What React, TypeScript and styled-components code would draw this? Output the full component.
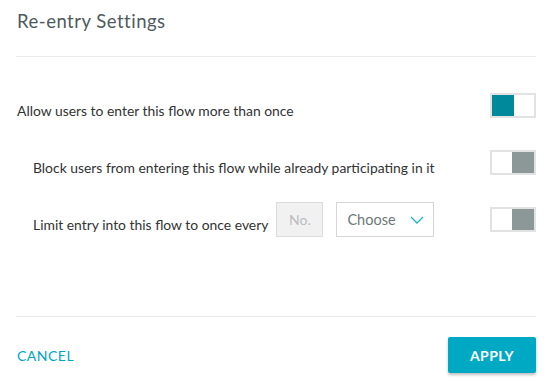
import React from 'react';
import styled, { createGlobalStyle } from 'styled-components';

const GlobalStyle = createGlobalStyle`
  body {
    margin: 0;
    background: #fff;
    font-family: Lato, "Open Sans", sans-serif;
  }
`;

const Modal = styled.div`
  width: 556px;
  height: 385px;
  display: flex;
  flex-direction: column;
  padding: 0 20px 0 16px;
  box-sizing: border-box;
`;

const Header = styled.div`
  height: 57px;
  display: flex;
  align-items: center;
  padding: 0 0 14px 1px;
  border-bottom: 1px solid #ebebeb;
  box-sizing: border-box;
`;

const Title = styled.h2`
  margin: 0;
  font-size: 18.5px;
  font-weight: 400;
  letter-spacing: 0.5px;
  color: #4f5a5d;
`;

const Body = styled.div`
  flex: 1;
  display: flex;
  flex-direction: column;
  padding-top: 36px;
`;

const Row = styled.div<{ $indent?: boolean; $gap: number }>`
  display: flex;
  align-items: center;
  height: 25px;
  margin-bottom: ${(p) => p.$gap}px;
  padding-left: ${(p) => (p.$indent ? 17 : 1)}px;
`;

const Label = styled.span`
  font-size: 13.9px;
  color: #333;
  flex: 0 0 auto;
  padding-top: 9px;
`;

const Controls = styled.div`
  display: flex;
  align-items: center;
  gap: 13px;
  margin-left: 8px;
`;

const NumberBox = styled.div`
  width: 47px;
  height: 35px;
  box-sizing: border-box;
  border: 1px solid #dcdcdc;
  background: #f1f1f1;
  color: #b8bcbd;
  font-size: 14px;
  display: flex;
  align-items: center;
  justify-content: center;
`;

const Select = styled.div`
  width: 98px;
  height: 35px;
  box-sizing: border-box;
  border: 1px solid #d6d6d6;
  background: #fff;
  color: #6d7779;
  font-size: 14.5px;
  display: flex;
  align-items: center;
  justify-content: space-between;
  padding: 0 9px 0 10px;
`;

const Spacer = styled.div`
  flex: 1;
`;

const Toggle = styled.div`
  width: 46px;
  height: 25px;
  box-sizing: border-box;
  border: 2px solid #e2e2e2;
  display: flex;
  background: #fff;
`;

const Knob = styled.div<{ $on?: boolean }>`
  width: 22px;
  height: 100%;
  margin-left: ${(p) => (p.$on ? 0 : 20)}px;
  background: ${(p) => (p.$on ? '#00889b' : '#8c9797')};
`;

const Footer = styled.div`
  border-top: 1px solid #ebebeb;
  display: flex;
  align-items: center;
  justify-content: space-between;
  padding: 20px 0 12px 1px;
`;

const CancelButton = styled.button`
  border: none;
  background: none;
  padding: 0;
  font-family: inherit;
  font-size: 14px;
  color: #00a6c0;
  letter-spacing: 0.5px;
`;

const ApplyButton = styled.button`
  width: 88px;
  height: 36px;
  border: none;
  border-radius: 2px;
  background: #00a9c3;
  color: #fff;
  font-family: inherit;
  font-size: 14px;
  font-weight: 700;
  letter-spacing: 0.4px;
  box-shadow: 0 2px 3px rgba(0, 0, 0, 0.25);
`;

const Chevron = () => (
  <svg width="14" height="8" viewBox="0 0 14 8" fill="none">
    <path d="M1 1l6 6 6-6" stroke="#1fb3c9" strokeWidth="1.3" />
  </svg>
);

export default function App() {
  return (
    <>
      <GlobalStyle />
      <Modal>
        <Header>
          <Title>Re-entry Settings</Title>
        </Header>
        <Body>
          <Row $gap={32}>
            <Label>Allow users to enter this flow more than once</Label>
            <Spacer />
            <Toggle>
              <Knob $on />
            </Toggle>
          </Row>
          <Row $indent $gap={32}>
            <Label>Block users from entering this flow while already participating in it</Label>
            <Spacer />
            <Toggle>
              <Knob />
            </Toggle>
          </Row>
          <Row $indent $gap={0}>
            <Label>Limit entry into this flow to once every</Label>
            <Controls>
              <NumberBox>No.</NumberBox>
              <Select>
                Choose
                <Chevron />
              </Select>
            </Controls>
            <Spacer />
            <Toggle>
              <Knob />
            </Toggle>
          </Row>
        </Body>
        <Footer>
          <CancelButton>CANCEL</CancelButton>
          <ApplyButton>APPLY</ApplyButton>
        </Footer>
      </Modal>
    </>
  );
}
